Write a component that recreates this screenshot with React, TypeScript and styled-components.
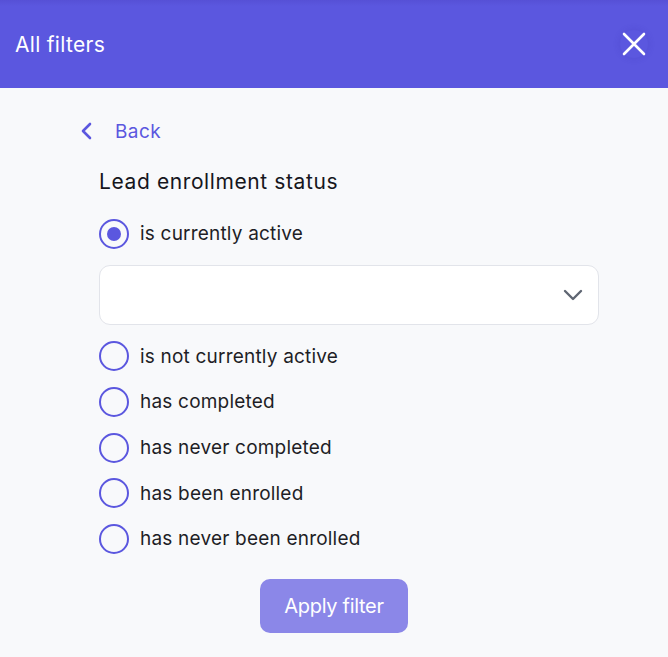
import React, { useState } from "react";
import styled, { createGlobalStyle } from "styled-components";

const Global = createGlobalStyle`
  html, body { margin: 0; padding: 0; background: #f8f9fb; }
  body { font-family: "Inter", "Noto Sans", sans-serif; }
  * { box-sizing: border-box; }
`;

const Page = styled.div`
  width: 668px;
  min-height: 657px;
  background: #f8f9fb;
  display: flex;
  flex-direction: column;
`;

const Header = styled.header`
  height: 88px;
  background: linear-gradient(#5650d6 0px, #5b57df 6px, #5b57df 100%);
  display: flex;
  align-items: center;
  justify-content: space-between;
  padding: 0 20px 0 15px;
`;

const Title = styled.h1`
  margin: 0;
  font-size: 21px;
  font-weight: 400;
  color: #ffffff;
  letter-spacing: 0.3px;
`;

const CloseButton = styled.button`
  width: 28px;
  height: 28px;
  border: none;
  background: transparent;
  padding: 0;
  display: flex;
  align-items: center;
  justify-content: center;
  border-radius: 50%;
  box-shadow: 0 0 6px rgba(60, 50, 180, 0.25);
  cursor: pointer;
`;

const Body = styled.main`
  display: flex;
  flex-direction: column;
  padding: 30px 69px 0 80px;
`;

const BackLink = styled.button`
  display: flex;
  align-items: center;
  gap: 22px;
  border: none;
  background: none;
  padding: 0;
  font-family: inherit;
  font-size: 19px;
  letter-spacing: 0.4px;
  color: #5b57df;
  height: 26px;
  cursor: pointer;
  align-self: flex-start;
`;

const Section = styled.section`
  display: flex;
  flex-direction: column;
  padding-left: 19px;
  margin-top: 24px;
`;

const SectionTitle = styled.h2`
  margin: 0;
  font-size: 21px;
  font-weight: 400;
  color: #16161d;
  height: 28px;
  line-height: 28px;
  letter-spacing: 0.6px;
`;

const Options = styled.div`
  display: flex;
  flex-direction: column;
  margin-top: 15px;
`;

const OptionRow = styled.label`
  display: flex;
  align-items: center;
  gap: 11px;
  height: 45.6px;
  font-size: 19px;
  color: #1e1e26;
  letter-spacing: 0.2px;
  cursor: pointer;
`;

const RadioCircle = styled.span<{ $checked: boolean }>`
  width: 30px;
  height: 30px;
  border-radius: 50%;
  border: 2.5px solid #5b57df;
  display: flex;
  align-items: center;
  justify-content: center;
  flex-shrink: 0;
  &::after {
    content: "";
    width: 14px;
    height: 14px;
    border-radius: 50%;
    background: #5b57df;
    display: ${(p) => (p.$checked ? "block" : "none")};
  }
`;

const SelectBox = styled.div`
  height: 60px;
  background: #ffffff;
  border: 1px solid #e2e4ea;
  border-radius: 11px;
  display: flex;
  align-items: center;
  justify-content: flex-end;
  padding-right: 15px;
  margin: 8px 0 9px;
`;

const Footer = styled.div`
  display: flex;
  justify-content: center;
  margin-top: 17px;
  padding-bottom: 25px;
`;

const ApplyButton = styled.button`
  width: 148px;
  height: 54px;
  border: none;
  border-radius: 10px;
  background: #8b87e8;
  color: #ffffff;
  font-family: inherit;
  font-size: 20px;
  letter-spacing: -0.3px;
  cursor: pointer;
`;

const options = [
  "is currently active",
  "is not currently active",
  "has completed",
  "has never completed",
  "has been enrolled",
  "has never been enrolled",
];

export default function App() {
  const [selected, setSelected] = useState(0);
  return (
    <Page>
      <Global />
      <Header>
        <Title>All filters</Title>
        <CloseButton aria-label="Close">
          <svg width="24" height="24" viewBox="0 0 24 24">
            <path d="M2 2 L22 22 M22 2 L2 22" stroke="#fff" strokeWidth="2.6" strokeLinecap="round" />
          </svg>
        </CloseButton>
      </Header>
      <Body>
        <BackLink>
          <svg width="13" height="18" viewBox="0 0 13 18">
            <path d="M10 2 L3 9 L10 16" stroke="#5b57df" strokeWidth="2.6" fill="none" strokeLinecap="round" strokeLinejoin="round" />
          </svg>
          Back
        </BackLink>
        <Section>
          <SectionTitle>Lead enrollment status</SectionTitle>
          <Options>
            {options.map((o, i) => (
              <React.Fragment key={o}>
                <OptionRow onClick={() => setSelected(i)}>
                  <RadioCircle $checked={selected === i} />
                  {o}
                </OptionRow>
                {i === 0 && selected === 0 && (
                  <SelectBox>
                    <svg width="20" height="12" viewBox="0 0 20 12">
                      <path d="M2 2 L10 10 L18 2" stroke="#5f6673" strokeWidth="2.4" fill="none" strokeLinecap="round" strokeLinejoin="round" />
                    </svg>
                  </SelectBox>
                )}
              </React.Fragment>
            ))}
          </Options>
        </Section>
      </Body>
      <Footer>
        <ApplyButton>Apply filter</ApplyButton>
      </Footer>
    </Page>
  );
}
